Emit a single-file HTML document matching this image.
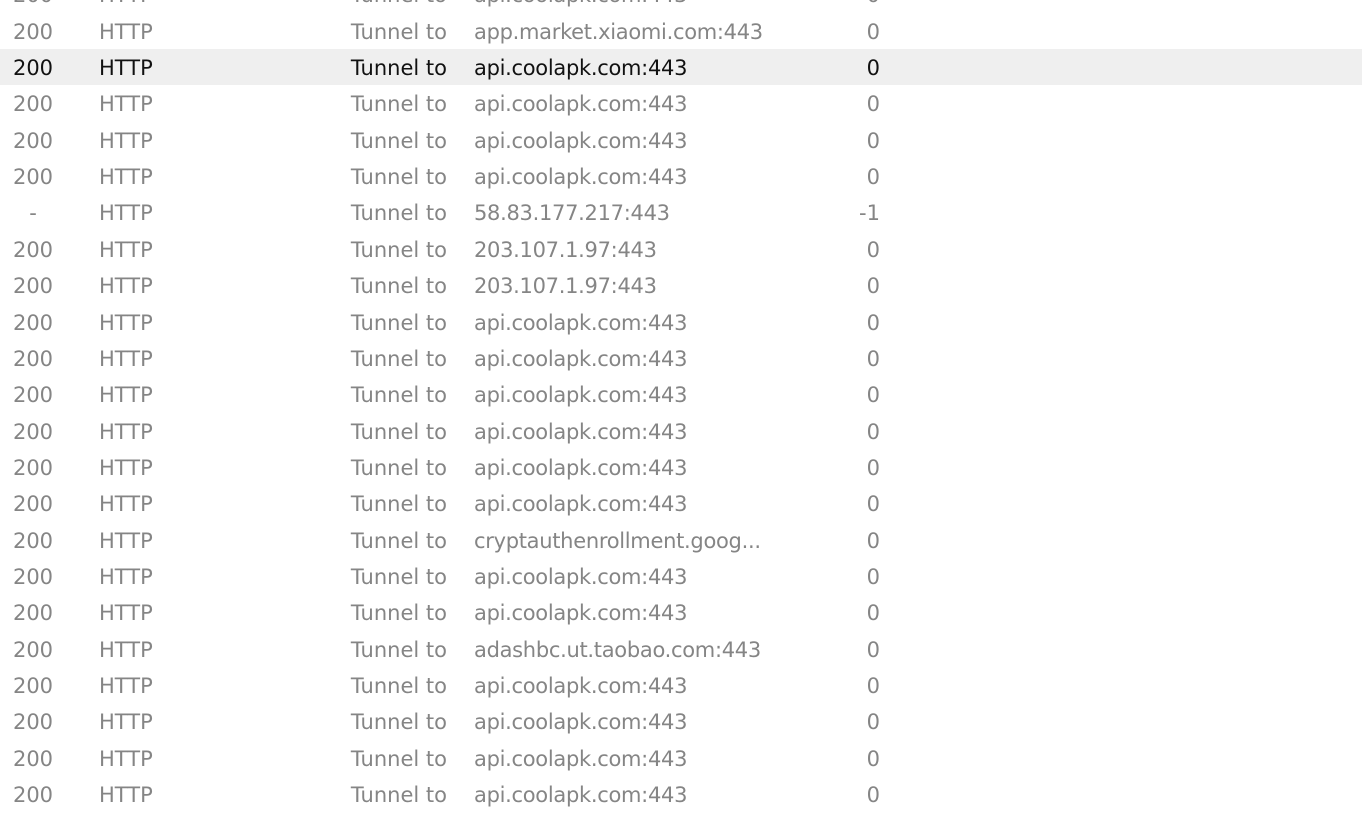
<!DOCTYPE html>
<html><head><style>
body{margin:0;width:1362px;height:790px;overflow:hidden;background:#fff;font-family:Tahoma,"DejaVu Sans","Liberation Sans",sans-serif;font-size:21px;color:#858585;position:relative}
.r{position:absolute;left:0;width:1362px;height:36px;line-height:39px;white-space:nowrap}
.r span{position:absolute;top:0}
.s{left:0;width:66px;text-align:center}
.p{left:99px}
.t{left:300px;width:147px;text-align:right}
.h{left:474px;letter-spacing:-0.3px}
.n{left:800px;width:80px;text-align:right}
.sel{background:#efefef;color:#111}
</style></head><body>
<div id="c"></div>
<script>
var rows=[["200","api.coolapk.com:443","0"],["200","app.market.xiaomi.com:443","0"],["200","api.coolapk.com:443","0",1],["200","api.coolapk.com:443","0"],["200","api.coolapk.com:443","0"],["200","api.coolapk.com:443","0"],["-","58.83.177.217:443","-1"],["200","203.107.1.97:443","0"],["200","203.107.1.97:443","0"],["200","api.coolapk.com:443","0"],["200","api.coolapk.com:443","0"],["200","api.coolapk.com:443","0"],["200","api.coolapk.com:443","0"],["200","api.coolapk.com:443","0"],["200","api.coolapk.com:443","0"],["200","cryptauthenrollment.goog...","0"],["200","api.coolapk.com:443","0"],["200","api.coolapk.com:443","0"],["200","adashbc.ut.taobao.com:443","0"],["200","api.coolapk.com:443","0"],["200","api.coolapk.com:443","0"],["200","api.coolapk.com:443","0"],["200","api.coolapk.com:443","0"]];
var h="";
rows.forEach(function(r,i){var top=(-23.7+36.35*i).toFixed(1);
h+='<div class="r'+(r[3]?' sel':'')+'" style="top:'+top+'px"><span class="s">'+r[0]+'</span><span class="p">HTTP</span><span class="t">Tunnel to</span><span class="h">'+r[1]+'</span><span class="n">'+r[2]+'</span></div>';});
document.getElementById("c").innerHTML=h;
</script>
</body></html>
